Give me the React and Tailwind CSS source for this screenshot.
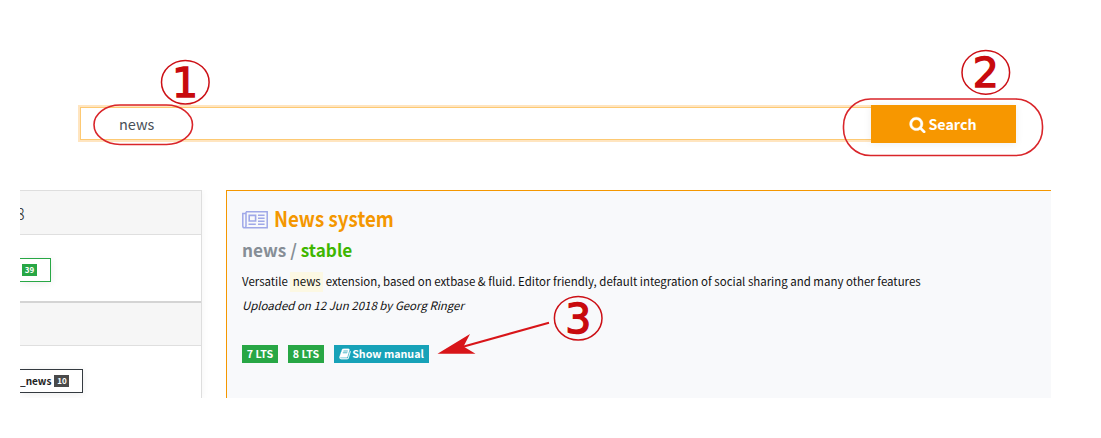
const sans = "font-['Noto_Sans_CJK_SC','Noto_Sans',sans-serif]";

function SearchIcon() {
  return (
    <svg viewBox="0 0 1792 1792" className="h-[17px] w-[17px] shrink-0 fill-white stroke-white" strokeWidth="40">
      <path d="M1216 832q0-185-131.5-316.5t-316.5-131.5-316.5 131.5-131.5 316.5 131.5 316.5 316.5 131.5 316.5-131.5 131.5-316.5zm512 832q0 52-38 90t-90 38q-54 0-90-38l-343-342q-179 124-399 124-143 0-273.5-55.5t-225-150-150-225-55.5-273.5 55.5-273.5 150-225 225-150 273.5-55.5 273.5 55.5 225 150 150 225 55.5 273.5q0 220-124 399l343 343q37 37 37 90z" />
    </svg>
  );
}

function BookIcon() {
  return (
    <svg viewBox="0 0 1792 1792" className="h-3 w-3 shrink-0 fill-white stroke-white" strokeWidth="40">
      <path d="M1703 478q40 57 18 129l-275 906q-19 64-76.5 107.5t-122.5 43.5h-923q-77 0-148.5-53.5t-99.5-131.5q-24-67-2-127 0-4 3-27t4-37q1-8-3-21.5t-3-19.5q2-11 8-21t16.5-23.5 16.5-23.5q23-38 45-91.5t30-91.5q3-10 .5-30t-.5-28q3-11 17-28t17-23q21-36 42-92t25-90q1-9-2.5-32t.5-28q4-13 22-30.5t22-22.5q19-26 42.5-84.5t27.5-96.5q1-8-3-25.5t-2-26.5q2-8 9-18t18-23 17-21q8-12 16.5-30.5t15-35 16-36 19.5-32 26.5-23.5 36-11.5 47.5 5.5l-1 3q38-9 51-9h761q74 0 114 56t18 130l-274 906q-36 119-71.5 153.5t-128.5 34.5h-869q-27 0-38 15-11 16-1 43 24 70 144 70h923q29 0 56-15.5t35-41.5l300-987q7-22 5-57 38 15 59 43zm-1064 2q-4 13 2 22.5t20 9.5h608q13 0 25.5-9.5t16.5-22.5l21-64q4-13-2-22.5t-20-9.5h-608q-13 0-25.5 9.5t-16.5 22.5zm-83 256q-4 13 2 22.5t20 9.5h608q13 0 25.5-9.5t16.5-22.5l21-64q4-13-2-22.5t-20-9.5h-608q-13 0-25.5 9.5t-16.5 22.5z" />
    </svg>
  );
}

function NewspaperIcon() {
  return (
    <svg viewBox="0 0 26 18" className="mb-px h-[18px] w-[26px] shrink-0" fill="none" stroke="#9fa8e8" strokeWidth="1.5">
      <path d="M4 .8H25.2V16.8H2.6Q.8 16.8 .8 15V2.6H4M4 .8V15Q4 16.8 2.6 16.8" />
      <path d="M7.2 4.4H13.6V10H7.2Z" strokeWidth="1.6" />
      <path d="M16 4.2H22.6M16 7.2H22.6M16 10.2H22.6M6.5 13.2H13.8M16 13.2H22.6" />
    </svg>
  );
}

function Annotations() {
  return (
    <svg className="pointer-events-none absolute inset-0 h-[438px] w-[1101px]" viewBox="0 0 1101 438">
      <g fill="none" stroke="#d9252a" strokeWidth="1.6">
        <rect x="94" y="105" width="98.5" height="39.5" rx="26" ry="19.75" />
        <rect x="843.5" y="99" width="199" height="56.5" rx="27" />
      </g>
      <g fill="none" stroke="#cc1016" strokeWidth="1.5">
        <ellipse cx="185.3" cy="82.2" rx="23.8" ry="21.8" />
        <ellipse cx="985.8" cy="72.4" rx="23.8" ry="21.8" />
        <ellipse cx="578.2" cy="318.2" rx="23.8" ry="21.8" />
      </g>
      <g className="font-['DejaVu_Sans',sans-serif] text-[41px]" fill="#c80a0e" stroke="#c80a0e" strokeWidth="1.4" textAnchor="middle">
        <text x="185" y="96.5">1</text>
        <text x="985.8" y="87">2</text>
        <text x="578.2" y="332.6">3</text>
      </g>
      <path d="M549 322.7L462 347" stroke="#d81519" strokeWidth="2" />
      <path d="M437.5 353.8L470 334L463.5 346.5L475.5 353.8Z" fill="#d81519" />
    </svg>
  );
}

export default function App() {
  return (
    <div className={`relative h-[438px] w-[1101px] overflow-hidden bg-white ${sans}`}>
      <div className="flex h-[190px] items-start pt-[105px] pl-[78px]">
        <div className="h-[37px] w-[793px] bg-[#ffe5c0] py-0.5 pl-0.5">
          <div className="flex h-[33px] items-center border border-r-0 border-[#fdc973] bg-white pt-px pl-[38px] text-[14.5px] leading-none text-[#495057]">
            news
          </div>
        </div>
        <button className="flex h-[38px] w-[145px] items-center justify-center gap-[2px] bg-[#f79700] pr-px text-[14.3px] leading-none font-bold text-white shadow-[0_1px_8px_rgba(0,0,0,0.07)]">
          <SearchIcon />
          <span>Search</span>
        </button>
      </div>

      <div className="ml-5 flex h-52 w-[1031px] gap-6 overflow-hidden">
        <aside className="h-52 w-[182px] shrink-0 border-t border-r border-[#dedede] bg-white shadow-[0_0_8px_rgba(0,0,0,0.05)]">
          <div className="flex h-11 items-center overflow-hidden border-b border-[#dfdfdf] bg-[#f6f6f6] text-base font-light text-[#222]">
            <span className="-ml-1">8</span>
          </div>
          <div className="h-[66px] pt-[23px]">
            <div className="flex h-6 w-[31px] items-center border border-l-0 border-[#28a745] pl-0.5 shadow-[0_1px_8px_rgba(0,0,0,0.08)]">
              <span className="flex h-3 w-[15px] items-center justify-center bg-[#28a745] text-[8px] leading-none font-bold text-white">39</span>
            </div>
          </div>
          <div className="h-[45px] border-t-2 border-b border-t-[#d4d4d4] border-b-[#dfdfdf] bg-[#f6f6f6]" />
          <div className="pt-[23px]">
            <div className="flex h-6 w-[63px] items-center gap-[3px] border border-l-0 border-[#343a40] text-[10px] leading-none font-bold text-[#222] shadow-[0_1px_8px_rgba(0,0,0,0.08)]">
              <span>_news</span>
              <span className="flex h-3 w-[15px] items-center justify-center bg-[#4a4a4a] text-[8px] leading-none text-white">10</span>
            </div>
          </div>
        </aside>

        <main className="h-52 w-[825px] shrink-0 border-t border-l border-[#f49700] bg-[#f8f9fb] pl-[15px]">
          <div className="flex h-[42px] items-end gap-[6px] pb-[3px]">
            <NewspaperIcon />
            <h1 className="h-6 origin-left scale-x-[0.892] text-[21px] leading-6 font-bold whitespace-nowrap text-[#f49700]">News system</h1>
          </div>
          <h2 className="h-[37px] pt-[3px] text-[17.2px] leading-[27px] font-bold text-[#868e96]">
            news / <span className="text-[#3fb600]">stable</span>
          </h2>
          <p className="flex h-6 items-center text-[11.46px] leading-none whitespace-pre text-[#111]">
            <span>Versatile </span>
            <mark className="flex h-5 items-center bg-[#fcf8e3] px-[2.4px] text-[#111]">news</mark>
            <span> extension, based on extbase &amp; fluid. Editor friendly, default integration of social sharing and many other features</span>
          </p>
          <p className="flex h-6 items-center text-[11.46px] leading-none text-[#111] italic">Uploaded on 12 Jun 2018 by Georg Ringer</p>
          <div className="mt-[27px] flex gap-[10px] text-[10.7px] leading-none font-bold text-white">
            <span className="flex h-[18px] w-9 items-center justify-center bg-[#28a745]">7 LTS</span>
            <span className="flex h-[18px] w-9 items-center justify-center bg-[#28a745]">8 LTS</span>
            <span className="flex h-[18px] w-[95px] items-center justify-center gap-px bg-[#17a2b8]">
              <BookIcon />
              <span className="whitespace-nowrap">Show manual</span>
            </span>
          </div>
        </main>
      </div>
      <Annotations />
    </div>
  );
}
